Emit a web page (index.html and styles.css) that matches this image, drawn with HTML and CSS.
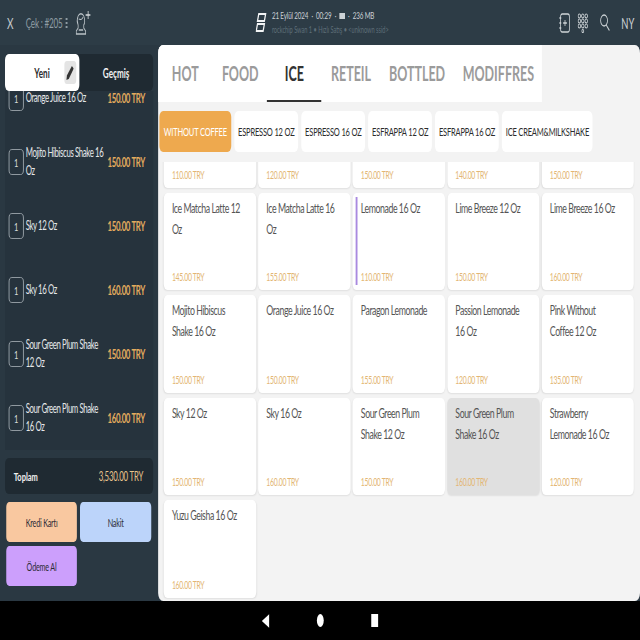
FILE: index.html
```html
<!DOCTYPE html>
<html lang="tr">
<head>
  <meta charset="UTF-8">
  <title>Çek #205</title>
  <link rel="stylesheet" href="styles.css">
</head>
<body>
<div class="screen">
<div class="app">

  <!-- Top bar -->
  <header class="topbar">
    <div class="top-left">
      <span class="close">X</span>
      <span class="check">Çek : #205</span>
      <span class="check-dots"><i></i><i></i><i></i></span>
      <svg class="guest" width="24" height="24" viewBox="0 0 24 24" fill="none" stroke="#b9c1c6" stroke-width="1.300">
        <path d="M1 23h15v-3l-3-3v-3c2-2 2-6 0-9s-7-3-9 0-2 6 0 9v3l-3 3z"/>
        <path d="M5 8c3 1 6 0 7-2M5 19h7"/>
        <path d="M20 0v8M16 4h8" stroke="#d5d9dc"/>
      </svg>
    </div>
    <div class="top-center">
      <svg class="logo" width="18" height="19" viewBox="0 0 18 19" fill="none" stroke="#f2f4f5" stroke-width="2">
        <path d="M5 1h11l-2 7H3zM3 11h11l-2 7H1z"/>
      </svg>
      <div>
        <div class="status"><span>21 Eylül 2024</span><span>·</span><span>00:29</span><span>·</span><span class="battery"></span><span>·</span><span>236 MB</span></div>
        <div class="device">rockchip Swan 1 • Hızlı Satış • &lt;unknown ssid&gt;</div>
      </div>
    </div>
    <div class="top-right">
      <svg width="18" height="20" viewBox="0 0 18 20" fill="none" stroke="#cfd5d8" stroke-width="1.300">
        <rect x="3" y="1" width="14" height="18" rx="2.500"/>
        <path d="M1 5h3M1 10h3M1 15h3M10 7v6M7 10h6"/>
      </svg>
      <svg width="17" height="20" viewBox="0 0 17 20" fill="none" stroke="#cfd5d8" stroke-width="1.200">
        <circle cx="3" cy="3" r="2"/><circle cx="8.500" cy="3" r="2"/><circle cx="14" cy="3" r="2"/>
        <circle cx="3" cy="8" r="2"/><circle cx="8.500" cy="8" r="2"/><circle cx="14" cy="8" r="2"/>
        <circle cx="3" cy="13" r="2"/><circle cx="8.500" cy="13" r="2"/><circle cx="14" cy="13" r="2"/>
        <circle cx="8.500" cy="18" r="1.500"/>
      </svg>
      <svg class="search" width="17" height="17" viewBox="0 0 17 17" fill="none" stroke="#cfd5d8" stroke-width="1.300">
        <circle cx="7.500" cy="6.500" r="5.500"/><path d="M11 11l5 5.500"/>
      </svg>
      <span class="user">NY</span>
    </div>
  </header>

  <div class="main">

    <!-- Check panel -->
    <aside class="side">
      <div class="segment">
        <div class="seg-btn seg-active">
          <span>Yeni</span>
          <span class="pencil">
            <svg width="12" height="14" viewBox="0 0 12 14" fill="#333"><path d="M9 0l3 2.500-8 10.500-4 1 1-4.500z"/></svg>
          </span>
        </div>
        <div class="seg-btn">Geçmiş</div>
      </div>

      <div class="order-list">
        <div class="order-inner">
          <div class="order"><span class="qty">1</span><span class="order-name">Orange Juice 16 Oz</span><span class="order-price">150.00 TRY</span></div>
          <div class="order"><span class="qty">1</span><span class="order-name">Mojito Hibiscus Shake 16 Oz</span><span class="order-price">150.00 TRY</span></div>
          <div class="order"><span class="qty">1</span><span class="order-name">Sky 12 Oz</span><span class="order-price">150.00 TRY</span></div>
          <div class="order"><span class="qty">1</span><span class="order-name">Sky 16 Oz</span><span class="order-price">160.00 TRY</span></div>
          <div class="order"><span class="qty">1</span><span class="order-name">Sour Green Plum Shake 12 Oz</span><span class="order-price">150.00 TRY</span></div>
          <div class="order"><span class="qty">1</span><span class="order-name">Sour Green Plum Shake 16 Oz</span><span class="order-price">160.00 TRY</span></div>
        </div>
      </div>

      <div class="total">
        <span>Toplam</span>
        <span class="total-price">3,530.00 TRY</span>
      </div>

      <div class="pay">
        <div class="pay-btn pay-card">Kredi Kartı</div>
        <div class="pay-btn pay-cash">Nakit</div>
        <div class="pay-btn pay-take">Ödeme Al</div>
      </div>
    </aside>

    <!-- Menu -->
    <section class="menu">
      <nav class="tabs">
        <span class="tab">HOT</span>
        <span class="tab">FOOD</span>
        <span class="tab tab-active">ICE</span>
        <span class="tab">RETEIL</span>
        <span class="tab">BOTTLED</span>
        <span class="tab">MODIFFRES</span>
      </nav>

      <div class="chips">
        <span class="chip chip-active">WITHOUT COFFEE</span>
        <span class="chip">ESPRESSO 12 OZ</span>
        <span class="chip">ESPRESSO 16 OZ</span>
        <span class="chip">ESFRAPPA 12 OZ</span>
        <span class="chip">ESFRAPPA 16 OZ</span>
        <span class="chip">ICE CREAM&amp;MILKSHAKE</span>
      </div>

      <div class="products">
        <div class="grid">
          <div class="card"><span class="price">110.00 TRY</span></div>
          <div class="card"><span class="price">120.00 TRY</span></div>
          <div class="card"><span class="price">150.00 TRY</span></div>
          <div class="card"><span class="price">140.00 TRY</span></div>
          <div class="card"><span class="price">150.00 TRY</span></div>

          <div class="card"><span class="title">Ice Matcha Latte 12 Oz</span><span class="price">145.00 TRY</span></div>
          <div class="card"><span class="title">Ice Matcha Latte 16 Oz</span><span class="price">155.00 TRY</span></div>
          <div class="card card-marked"><span class="title">Lemonade 16 Oz</span><span class="price">110.00 TRY</span></div>
          <div class="card"><span class="title">Lime Breeze 12 Oz</span><span class="price">150.00 TRY</span></div>
          <div class="card"><span class="title">Lime Breeze 16 Oz</span><span class="price">160.00 TRY</span></div>

          <div class="card"><span class="title">Mojito Hibiscus Shake 16 Oz</span><span class="price">150.00 TRY</span></div>
          <div class="card"><span class="title">Orange Juice 16 Oz</span><span class="price">150.00 TRY</span></div>
          <div class="card"><span class="title">Paragon Lemonade</span><span class="price">155.00 TRY</span></div>
          <div class="card"><span class="title">Passion Lemonade 16 Oz</span><span class="price">120.00 TRY</span></div>
          <div class="card"><span class="title">Pink Without<br>Coffee 12 Oz</span><span class="price">135.00 TRY</span></div>

          <div class="card"><span class="title">Sky 12 Oz</span><span class="price">150.00 TRY</span></div>
          <div class="card"><span class="title">Sky 16 Oz</span><span class="price">160.00 TRY</span></div>
          <div class="card"><span class="title">Sour Green Plum Shake 12 Oz</span><span class="price">150.00 TRY</span></div>
          <div class="card card-pressed"><span class="title">Sour Green Plum Shake 16 Oz</span><span class="price">160.00 TRY</span></div>
          <div class="card"><span class="title">Strawberry Lemonade 16 Oz</span><span class="price">120.00 TRY</span></div>

          <div class="card"><span class="title">Yuzu Geisha 16 Oz</span><span class="price">160.00 TRY</span></div>
        </div>
      </div>
    </section>
  </div>

  <!-- Android nav bar -->
  <footer class="navbar">
    <svg width="12" height="14" viewBox="0 0 12 14" fill="#fff"><path d="M12 0v14L0 7z"/></svg>
    <span class="nav-dot"></span>
    <span class="nav-square"></span>
  </footer>

</div>
</div>
</body>
</html>
```

FILE: styles.css
```css
html, body {
  margin: 0;
  padding: 0;
  background: #000;
}

.screen {
  width: 640px;
  height: 640px;
  overflow: hidden;
}

/* the whole tablet screen is squeezed sideways in the screenshot */
.app {
  width: 1024px;
  height: 640px;
  transform: scaleX(0.625);
  transform-origin: left top;
  display: flex;
  flex-direction: column;
  font-family: "Lato", "Liberation Sans", sans-serif;
  background: #2b3944;
}

.topbar {
  height: 45px;
  flex: none;
  display: flex;
  align-items: center;
  justify-content: space-between;
  background: #2d3c46;
  padding: 0 9px 0 11px;
}

.top-left {
  display: flex;
  align-items: center;
  width: 398px;
}

.close {
  color: #c3c9cc;
  font-size: 16px;
  width: 29px;
}

.check {
  color: #8f9ca4;
  font-size: 13px;
  letter-spacing: -0.3px;
  margin-left: 1px;
}

.check-dots {
  display: flex;
  flex-direction: column;
  gap: 2px;
  margin-left: 5px;
}

.check-dots i {
  width: 3px;
  height: 2px;
  background: #8f9ca4;
}

.guest {
  margin-left: 13px;
}

.top-center {
  display: flex;
  align-items: center;
  gap: 8px;
  flex: 1;
}

.status {
  display: flex;
  align-items: center;
  gap: 5px;
  color: #ccd2d6;
  font-size: 10px;
  letter-spacing: -0.2px;
  line-height: 13px;
}

.battery {
  display: inline-block;
  width: 9px;
  height: 6px;
  background: #ccd2d6;
}

.device {
  color: #5f6f79;
  font-size: 9px;
  line-height: 13px;
  margin-top: 1px;
}

.top-right {
  display: flex;
  align-items: center;
  gap: 12px;
}

.search {
  margin-left: 6px;
}

.user {
  color: #cfd5d8;
  font-size: 15px;
  margin-left: 6px;
}

.main {
  flex: 1;
  display: flex;
  min-height: 0;
}

/* left panel */
.side {
  width: 253px;
  flex: none;
  box-sizing: border-box;
  padding: 9px 8px 0;
  display: flex;
  flex-direction: column;
  background: #2a3842;
}

.segment {
  height: 37px;
  flex: none;
  display: flex;
  background: #1f2a32;
  border-radius: 6px;
  position: relative;
  z-index: 1;
}

.seg-btn {
  flex: 1;
  display: flex;
  align-items: center;
  justify-content: center;
  color: #f0f0f0;
  font-size: 13px;
  font-weight: 700;
}

.seg-active {
  background: #fff;
  color: #2b2b2b;
  border-radius: 6px;
  position: relative;
}

.pencil {
  position: absolute;
  right: 5px;
  top: 7px;
  width: 19px;
  height: 23px;
  border-radius: 4px;
  background: #e4e4e4;
  display: flex;
  align-items: center;
  justify-content: center;
}

.order-list {
  height: 359px;
  flex: none;
  overflow: hidden;
  background: #26333d;
}

.order-inner {
  margin-top: -25px;
}

.order {
  height: 64px;
  display: flex;
  align-items: center;
  padding: 0 13px 0 6px;
}

.qty {
  width: 24px;
  height: 26px;
  flex: none;
  box-sizing: border-box;
  border: 1px solid #a9b2b8;
  border-radius: 5px;
  display: flex;
  align-items: center;
  justify-content: center;
  color: #d8dcdf;
  font-size: 12px;
}

.order-name {
  flex: 1;
  min-width: 0;
  color: #e4e7e9;
  font-size: 12.500px;
  letter-spacing: -0.6px;
  line-height: 18px;
  margin-left: 3px;
}

.order-price {
  flex: none;
  margin-left: 6px;
  color: #e3ab5e;
  font-size: 12.500px;
  font-weight: 700;
  letter-spacing: -0.5px;
}

.total {
  height: 36px;
  flex: none;
  margin-top: 8px;
  display: flex;
  align-items: center;
  justify-content: space-between;
  padding: 0 16px 0 14px;
  background: #1f2a32;
  border-radius: 6px;
  color: #f0f0f0;
  font-size: 12px;
  font-weight: 700;
}

.total-price {
  color: #e8c48c;
  font-size: 12.500px;
  font-weight: 400;
  letter-spacing: -0.3px;
}

.pay {
  display: grid;
  grid-template-columns: 113px 114px;
  grid-auto-rows: 40px;
  gap: 4px 5px;
  margin: 8px 0 0 2px;
}

.pay-btn {
  display: flex;
  align-items: center;
  justify-content: center;
  border-radius: 5px;
  color: #2b2b35;
  font-size: 11.500px;
  letter-spacing: -0.3px;
}

.pay-card { background: #f9c8a0; }
.pay-cash { background: #bcd4fa; }
.pay-take { background: #cc9ffc; }

/* right panel */
.menu {
  flex: 1;
  min-width: 0;
  display: flex;
  flex-direction: column;
  background: #f3f3f3;
  border-radius: 8px;
}

.tabs {
  width: 614px;
  height: 57px;
  flex: none;
  display: flex;
  background: #fff;
  border-radius: 8px 0 0 0;
}

.tab {
  min-width: 87px;
  height: 57px;
  line-height: 57px;
  box-sizing: border-box;
  padding: 0 15px;
  text-align: center;
  color: #9b9b9b;
  font-size: 20px;
  font-weight: 700;
}

.tab-active {
  color: #333;
  border-bottom: 2px solid #333;
}

.chips {
  display: flex;
  gap: 5px;
  flex: none;
  margin: 9px 0 10px 2px;
}

.chip {
  height: 41px;
  box-sizing: border-box;
  display: flex;
  align-items: center;
  padding: 0 6px;
  background: #fff;
  border-radius: 6px;
  color: #2b2b2b;
  font-size: 12px;
  letter-spacing: -0.3px;
  white-space: nowrap;
}

.chip-active {
  padding: 0 7px;
  background: #eea94e;
  color: #fff;
}

.products {
  flex: 1;
  min-height: 0;
  overflow: hidden;
}

.grid {
  display: grid;
  grid-template-columns: repeat(5, 147.500px);
  grid-auto-rows: 97.500px;
  gap: 5px 3.700px;
  margin: -72px 0 0 9px;
}

.card {
  position: relative;
  box-sizing: border-box;
  display: flex;
  flex-direction: column;
  justify-content: space-between;
  padding: 4px 16px 6px 13px;
  background: #fff;
  border-radius: 6px;
  box-shadow: 0 1px 2px rgba(0,0,0,0.08);
}

.card-pressed {
  background: #e0e0e0;
}

.card-marked::before {
  content: "";
  position: absolute;
  left: 5px;
  top: 4px;
  bottom: 5px;
  width: 3px;
  background: #a98ae0;
}

.title {
  color: #555;
  font-size: 14px;
  letter-spacing: -0.7px;
  line-height: 21px;
}

.price {
  margin-top: auto;
  color: #e3b673;
  font-size: 11px;
  letter-spacing: -0.5px;
  line-height: 14px;
}

.navbar {
  height: 39px;
  flex: none;
  display: flex;
  align-items: center;
  justify-content: center;
  gap: 76px;
  background: #000;
}

.nav-dot {
  width: 11px;
  height: 13px;
  border-radius: 50%;
  background: #fff;
}

.nav-square {
  width: 11px;
  height: 13px;
  background: #fff;
}
```
